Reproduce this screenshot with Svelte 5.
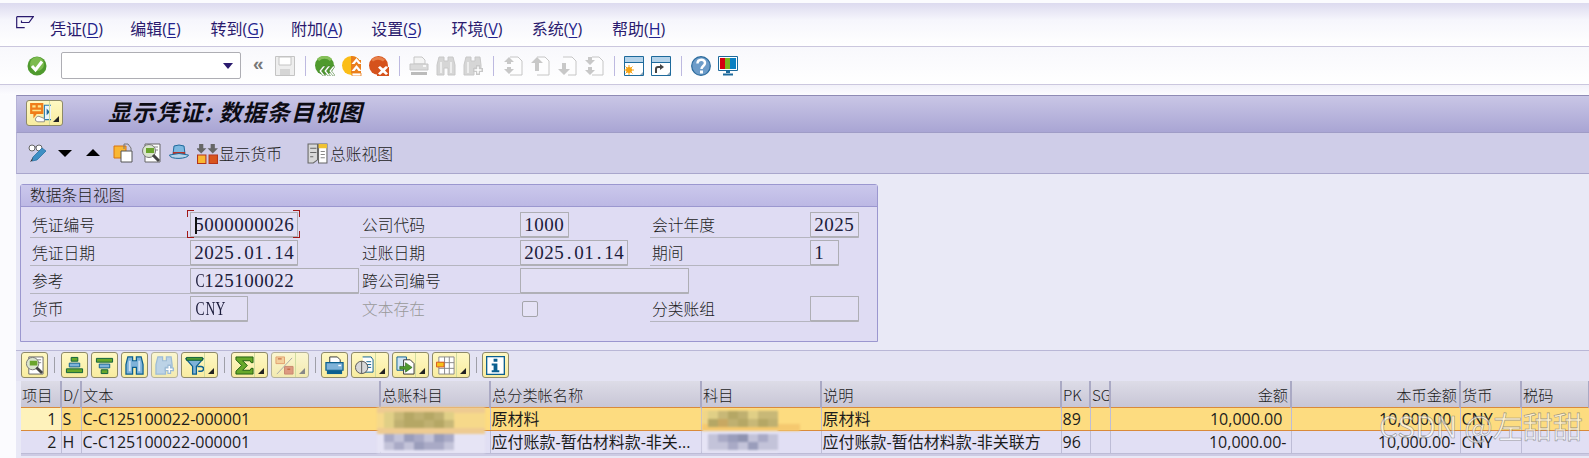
<script>
  // icon bodies, all drawn on a 20x20 box
  const I = {
    check: '<circle cx="10" cy="10" r="9.500" fill="#4f9a2e"/><circle cx="10" cy="8" r="7" fill="#7dbb4f"/><path d="M5 10l3.500 4L15 5.500" fill="none" stroke="#fff" stroke-width="3"/>',
    save: '<path d="M.5.500h19v19H.5z" fill="#eee" stroke="#c4c4c4"/><path d="M4 1h12v8H4z" fill="#fff" stroke="#c4c4c4"/><path d="M5 13h10v6H5z" fill="#d5d5d5"/>',
    back: '<circle cx="9.500" cy="9.500" r="9.500" fill="#4f9a2e"/><path d="M3 4a9 9 0 0 1 13 0" fill="none" stroke="#86c05a" stroke-width="3"/><path d="M9 15l4-5h2.500l-4 5 4 5H13zM14 15l4-5h2.500l-4 5 4 5H18zM4 15l4-5h2.500l-4 5 4 5H8z" fill="#fff" stroke="#2c6b18" stroke-width=".5"/>',
    exit: '<circle cx="9.500" cy="9.500" r="9.500" fill="#fbbd17"/><path d="M9 0a9.500 9.500 0 0 1 10 10v7H9z" fill="#ea7f1c"/><path d="M10 19V4h9v15z" fill="#ea7f1c"/><path d="M14.500 2l5 6h-3l-2-2.500L12.500 8h-3zM14.500 9l5 6h-3l-2-2.500-2 2.500h-3z" fill="#fff"/><path d="M10 17h9v3h-9z" fill="#fff" stroke="#ea7f1c" stroke-width=".8"/>',
    cancel: '<circle cx="9.500" cy="9.500" r="9.500" fill="#d5521c"/><path d="M3 4.500a9 9 0 0 1 12 0" fill="none" stroke="#e8814a" stroke-width="3"/><path d="M8 11h12v9H8z" fill="#d5521c"/><path d="M9 11.500l2-1.500 3 2.500 3-2.500 2 1.500-3 3 3 3-2 1.500-3-2.500-3 2.500-2-1.500 3-3z" fill="#fff"/>',
    print: '<path d="M5 1h8l3 3v4H5z" fill="#f4f4f4" stroke="#c6c6c6"/><path d="M1 8h18v6H1z" fill="#dadada" stroke="#c6c6c6"/><path d="M14 10h3" stroke="#fff" stroke-width="1.500"/><path d="M2 16h16v3H2z" fill="#bbb"/>',
    find: '<path d="M3 1h5v4h4V1h5l2 8v10h-7v-7H8v7H1V9z" fill="#d6d6d6" stroke="#c8c8c8"/><path d="M5 6v11M15 6v11" stroke="#eee" stroke-width="2"/>',
    findp: '<path d="M3 1h5v4h4V1h5l1 8v3h-7v7H1V9z" fill="#d6d6d6" stroke="#c8c8c8"/><path d="M5 6v11" stroke="#eee" stroke-width="2"/><path d="M15 9v10M10 14h10" stroke="#c8c8c8" stroke-width="4"/><path d="M15 10.500v7M11.500 14h7" stroke="#fff" stroke-width="1.500"/>',
    first: '<path d="M7 1h8l4 4v14H7" fill="#fdfdfe" stroke="#c6c6c6"/><path d="M6 1l5 5H8v2H4V6H1zM6 18l5-5H8v-2H4v2H1z" fill="#c8c8c8"/>',
    prev: '<path d="M7 1h8l4 4v14H7" fill="#fdfdfe" stroke="#c6c6c6"/><path d="M7 1l6 6H9v8H5V7H1z" fill="#c8c8c8"/>',
    next: '<path d="M6 1h9l4 4v14H11" fill="#fdfdfe" stroke="#c6c6c6"/><path d="M7 19l6-6H9V7H5v6H1z" fill="#c8c8c8"/>',
    last: '<path d="M8 1h7l4 4v14H8" fill="#fdfdfe" stroke="#c6c6c6"/><path d="M6 9l5-5H8V1H4v3H1zM6 19l5-5H8v-3H4v3H1z" fill="#c8c8c8"/>',
    winnew: '<path d="M.5.500h19v19H.5z" fill="#fff" stroke="#1e6a9c"/><path d="M1 1h18v5H1z" fill="#b5d3ea"/><path d="M.5 6.500h19" stroke="#1e6a9c"/><circle cx="5" cy="14" r="3" fill="#f6a313"/><path d="M5 9v10M0 14h10M1.500 10.500l7 7M8.500 10.500l-7 7" stroke="#f6a313"/><path d="M16 19h3v-3z" fill="#8fa6b8"/>',
    winlink: '<path d="M.5.500h19v19H.5z" fill="#fff" stroke="#1e6a9c"/><path d="M1 1h18v5H1z" fill="#b5d3ea"/><path d="M.5 6.500h19" stroke="#1e6a9c"/><path d="M5 17v-4q0-2 2-2h3" fill="none" stroke="#444" stroke-width="2"/><path d="M9 8l4 3-4 3z" fill="#444"/><path d="M16 19h3v-3z" fill="#8fa6b8"/>',
    help: '<circle cx="10" cy="10" r="9.300" fill="#6d9cc9" stroke="#2a6a9c" stroke-width="1.200"/><path d="M6.500 7.500c0-5 7.500-5 7.500-.5 0 3-3.500 3-3.500 6" fill="none" stroke="#fff" stroke-width="2.500"/><path d="M9 14.500h3v3H9z" fill="#fff"/>',
    monitor: '<path d="M.5.500h19v14H.5z" fill="#fff" stroke="#1e6a9c"/><path d="M2 2h5v11H2z" fill="#d40010"/><path d="M7 2h5v11H7z" fill="#7ab51d"/><path d="M12 2h6v11h-6z" fill="#0a7fc2"/><path d="M8 15h4v2H8zM5 17.500h10v2H5z" fill="#1e6a9c"/>',
    titlemenu: '<path d="M1 1h12v10H7l-3 4v-4H1z" fill="#ef7d1a"/><path d="M3 3h3v2H3zM8 3h3v2H8zM3 7h8v1.500H3z" fill="#fde68a"/><path d="M14 3h7v13h-7z" fill="#eaf4fb" stroke="#2a7db0"/><path d="M16 6l3 3-3 3z" fill="#1e6a9c"/><path d="M6 17a3 3 0 0 1 3-4l5 2v3H8z" fill="#fff" stroke="#777" stroke-width=".7"/>',
    glass: '<circle cx="4" cy="5" r="3" fill="#fff" stroke="#666"/><circle cx="11" cy="5" r="3" fill="#fff" stroke="#666"/><path d="M7 4h1" stroke="#666"/><path d="M4 18l1-4 9-9 4 3-9 9z" fill="#3f8fc4" stroke="#1e6a9c" stroke-width=".7"/><path d="M2 19l2-1 1-4z" fill="#333"/>',
    down: '<path d="M3 7h14l-7 7z" fill="#000"/>',
    up: '<path d="M3 13h14l-7-7z" fill="#000"/>',
    copy: '<path d="M1 3h12v12H1z" fill="#f9b733" stroke="#d9730f"/><path d="M8 8h11v11H8z" fill="#fff" stroke="#555"/><path d="M11 6V1h4l3 4v3" fill="none" stroke="#777"/>',
    detail: '<path d="M4 1h15v18H4z" fill="#fff" stroke="#666"/><path d="M7 4h10M7 7h10" stroke="#888"/><circle cx="8" cy="8" r="6.500" fill="#dbe5cf" stroke="#777"/><path d="M5 5h8v5H5z" fill="#6aa52c"/><path d="M12 12l6 6" stroke="#444" stroke-width="3"/>',
    hat: '<path d="M5 3q5-2 10 0l1 8H4z" fill="#7cb8e0" stroke="#1e6a9c"/><path d="M4 9h12v3H4z" fill="#b5342a"/><path d="M.5 12q9.500-3 19 0c0 4-19 5-19 0z" fill="#b5d3ea" stroke="#1e6a9c"/>',
    curr: '<path d="M2 1h4v4h3l-5 5-5-5h3zM13 1h4v4h3l-5 5-5-5h3z" fill="#666"/><path d="M.5 11.500h8v8h-8z" fill="#f9b733" stroke="#b5341a"/><path d="M11.500 11.500h8v8h-8z" fill="#d9541e" stroke="#b5341a"/>',
    ledger: '<path d="M1 1h9v15l-4 3H1z" fill="#d8d8d8" stroke="#666"/><path d="M3 5h6M3 9h6M3 13h3" stroke="#666"/><path d="M11 1h8v18h-8z" fill="#fff" stroke="#666"/><path d="M11 1h8v4h-8z" fill="#f1c232"/><path d="M13 8h4M13 11h4M13 14h4" stroke="#888"/>',
    sortup: '<path d="M6.500 1.500h7v4h-7z" fill="#67a82a" stroke="#0b5f3c"/><path d="M4.500 7.500h11v4h-11z" fill="#7eb2d9" stroke="#0b5f8f"/><path d="M1.500 13.500h17v4h-17z" fill="#67a82a" stroke="#0b5f3c"/>',
    sortdown: '<path d="M1.500 2.500h17v4h-17z" fill="#67a82a" stroke="#0b5f3c"/><path d="M4.500 8.500h11v4h-11z" fill="#7eb2d9" stroke="#0b5f8f"/><path d="M6.500 14.500h7v4h-7z" fill="#67a82a" stroke="#0b5f3c"/>',
    bfind: '<path d="M3 1h5v4h4V1h5l2 8v10h-7v-7H8v7H1V9z" fill="#7eb2d9" stroke="#0b5f8f" stroke-width="1.300"/><path d="M5 5v11M15 5v11" stroke="#cfe3f2" stroke-width="2"/>',
    bfindp: '<path d="M3 1h5v4h4V1h5l1 8v3h-7v7H1V9z" fill="#bcd3e6" stroke="#9dbcd6" stroke-width="1.300"/><path d="M15 9v10M10 14h10" stroke="#9dbcd6" stroke-width="4"/><path d="M15 10.500v7M11.500 14h7" stroke="#fff" stroke-width="1.500"/>',
    funnel: '<path d="M1 3h18L12 11v8H8v-8z" fill="#7eb2d9" stroke="#0b5f8f" stroke-width="1.300"/><path d="M1.500 1.500h17v3h-17z" fill="#4f9a2e" stroke="#0b5f3c"/><path d="M13 11h4a2.500 2.500 0 0 1 0 5h-3" fill="none" stroke="#0b5f8f" stroke-width="1.500"/>',
    sigma: '<path d="M1 1h18v6h-2l-1-2H8l5 5-5 5h8l1-2h2v6H1v-3l6-6-6-6z" fill="#67a82a" stroke="#1f5f12"/>',
    subtot: '<path d="M1 1h9v7H1z" fill="#f3d09c" stroke="#e0a070"/><path d="M10 11h9v8h-9z" fill="#dd9a80" stroke="#c98870"/><path d="M3 3h4M13 14h3" stroke="#c9704a" stroke-width="1.500"/><path d="M2 19L18 2" stroke="#a9a9a9"/>',
    bprint: '<path d="M5 1h8l3 3v3H5z" fill="#fff" stroke="#333"/><path d="M1 7h18v8H1z" fill="#7eb2d9" stroke="#0b5f8f" stroke-width="1.300"/><path d="M2 15h16v4H2z" fill="#0b5f8f"/><path d="M14 10h3" stroke="#fff" stroke-width="1.500"/>',
    view: '<path d="M8 1h9l2 3v13h-9" fill="#fff" stroke="#0b5f8f"/><path d="M12 6h5M12 9h5M12 12h5" stroke="#0b5f8f"/><circle cx="7" cy="12" r="6.500" fill="#d8d8d8" stroke="#555"/><path d="M7 5.500v13" stroke="#555"/>',
    export: '<path d="M1 1h10v14H1z" fill="#cfe3f2" stroke="#0b5f8f"/><path d="M8 4h7l4 4v11H8z" fill="#fff" stroke="#333"/><path d="M4 11h6V7l7 5-7 5v-3H4z" fill="#4f9a2e" stroke="#1f5f12" stroke-width=".6"/>',
    layout: '<path d="M3 1h16v18H3z" fill="#fff" stroke="#888"/><path d="M9 1v18M14 1v18M3 7h16M3 13h16" stroke="#888"/><path d="M.5 6.500h8v5h-8z" fill="#f5c21b" stroke="#d9541e"/>',
    info: '<path d="M.7.700h18.600v18.600H.7z" fill="#fff" stroke="#0b5f8f" stroke-width="1.400"/><path d="M8 3h4v3H8zM6 8h6v7h2v2H6v-2h2v-5H6z" fill="#0b5f8f"/>'
  };

  const menus = [['凭证', 'D'], ['编辑', 'E'], ['转到', 'G'], ['附加', 'A'], ['设置', 'S'], ['环境', 'V'], ['系统', 'Y'], ['帮助', 'H']];

  const tools = [
    ['back', 'exit', 'cancel'], ['print', 'find', 'findp'], ['first', 'prev', 'next', 'last'], ['winnew', 'winlink'], ['help', 'monitor']
  ];

  const gridTools = [
    [['detail']],
    [['sortup'], ['sortdown'], ['bfind'], ['bfindp', 0, 1], ['funnel', 1]],
    [['sigma', 1], ['subtot', 1, 1]],
    [['bprint'], ['view', 1], ['export', 1], ['layout', 1]],
    [['info']]
  ];

  const cols = [40, 20, 299, 110, 211, 120, 240, 29, 20, 181, 169, 61, 68];
  const heads = [['项目'], ['D/'], ['文本'], ['总账科目'], ['总分类帐名称'], ['科目'], ['说明'], ['PK'], ['SG'], ['金额', 'r'], ['本币金额', 'r'], ['货币'], ['税码']];
  const rows = [
    ['1', 'S', 'C-C125100022-000001', '', '原材料', '', '原材料', '89', '', '10,000.00 ', '10,000.00 ', 'CNY', ''],
    ['2', 'H', 'C-C125100022-000001', '', '应付账款-暂估材料款-非关...', '', '应付账款-暂估材料款-非关联方', '96', '', '10,000.00-', '10,000.00-', 'CNY', '']
  ];

  // pixelated patches over the account numbers, x/y relative to the table
  const Y = '#c8b877', D = '#b5a765', O = '#bfb070', T = '#e0cf86', B = '#a9aac6', C = '#9a9dbb', L = '#c3c3d9';
  const W = '#e6e4f5';
  const patches = [
    [356, 26, 108, 6, '#eecb92'], [356, 47, 108, 6, '#eecb92'], [356, 32, 108, 15, '#f6d98a'], [356, 53, 108, 19, W],
    [681, 29, 76, 14, '#f0d688'], [681, 43, 98, 7, '#f5c96f'], [681, 50, 76, 21, W]
  ];
  const mosaics = [
    [363, 31, [T, Y, D, O, D, O, T]],
    [363, 39, [T, O, D, D, O, D, Y]],
    [363, 53, [B, L, C, B, L, C, B]],
    [363, 61, [L, B, L, C, B, B, L]],
    [687, 30, [T, Y, D, O, T, Y, Y]],
    [687, 38, [D, '#c8a862', O, D, Y, D, O]],
    [687, 53, [L, B, C, '#8f93b0', L, B, L]],
    [687, 61, [L, L, B, L, C, L, L]]
  ];

  const isLetter = (ch) => /[A-Z]/.test(ch);
</script>

{#snippet icon(name, disabled = false)}
  <svg class="ic" class:dim={disabled} viewBox="0 0 20 20">{@html I[name]}</svg>
{/snippet}

{#snippet fixed(text)}
  {#each text as ch}<span class="ch" class:alpha={isLetter(ch)}>{ch}</span>{/each}
{/snippet}

<div class="screen">
  <div class="menubar">
    <svg class="menu-ic" viewBox="0 0 18 13"><path d="M.7.700h16.600L13 6.500H5.500v-2M.7.700v11h8" fill="none" stroke="#2a1a6e" stroke-width="1.200"/></svg>
    {#each menus as [name, key]}
      <span class="menu">{name}(<u>{key}</u>)</span>
    {/each}
  </div>

  <div class="systools">
    <span class="check">{@render icon('check')}</span>
    <div class="combo"><span class="caret"></span></div>
    <span class="chev">«</span>
    {@render icon('save')}
    {#each tools as group}
      <i class="sep"></i>
      {#each group as t}{@render icon(t)}{/each}
    {/each}
  </div>

  <div class="strip"></div>

  <main>
    <header class="titlebar">
      <button class="ybtn title-btn">{@render icon('titlemenu')}<span class="drop"></span></button>
      <h1>显示凭证: 数据条目视图</h1>
    </header>

    <div class="apptools">
      {@render icon('glass')}
      <span class="tri">{@render icon('down')}</span>
      <span class="tri">{@render icon('up')}</span>
      {@render icon('copy')}
      {@render icon('detail')}
      {@render icon('hat')}
      <span class="tool-text">{@render icon('curr')}显示货币</span>
      <span class="tool-text ledger">{@render icon('ledger')}总账视图</span>
    </div>

    <section class="group">
      <div class="group-head">数据条目视图</div>
      <div class="form">
        <label class="lbl">凭证编号</label>
        <div class="cell"><span class="inp w108 cursor">{@render fixed('5000000026')}<b class="marks"></b></span></div>
        <label class="lbl">公司代码</label>
        <div class="cell"><span class="inp w48">{@render fixed('1000')}</span></div>
        <label class="lbl">会计年度</label>
        <div class="cell"><span class="inp w48">{@render fixed('2025')}</span></div>

        <label class="lbl">凭证日期</label>
        <div class="cell"><span class="inp w108">{@render fixed('2025.01.14')}</span></div>
        <label class="lbl">过账日期</label>
        <div class="cell"><span class="inp w108">{@render fixed('2025.01.14')}</span></div>
        <label class="lbl">期间</label>
        <div class="cell"><span class="inp w28">{@render fixed('1')}</span></div>

        <label class="lbl">参考</label>
        <div class="cell"><span class="inp w168">{@render fixed('C125100022')}</span></div>
        <label class="lbl">跨公司编号</label>
        <div class="cell"><span class="inp w168"></span></div>
        <span></span>
        <span></span>

        <label class="lbl">货币</label>
        <div class="cell"><span class="inp w58">{@render fixed('CNY')}</span></div>
        <label class="lbl off">文本存在</label>
        <div class="cell nobox"><span class="box"></span></div>
        <label class="lbl">分类账组</label>
        <div class="cell"><span class="inp w48"></span></div>
      </div>
    </section>

    <div class="gridtools">
      {#each gridTools as group, g}
        {#if g}<i class="gsep"></i>{/if}
        {#each group as [name, menu, off]}
          <button class="ybtn" class:menu-btn={menu} class:off>{@render icon(name)}{#if menu}<span class="drop"></span>{/if}</button>
        {/each}
      {/each}
    </div>

    <div class="table-wrap">
      <table>
        <colgroup>{#each cols as w}<col style="width:{w}px" />{/each}</colgroup>
        <thead>
          <tr>{#each heads as [h, a]}<th class:r={a}>{h}</th>{/each}</tr>
        </thead>
        <tbody>
          {#each rows as row, n}
            <tr class:sel={n === 0}>
              {#each row as v, c}
                <td class:key={c === 0} class:r={c === 0 || c === 9 || c === 10}>{v}</td>
              {/each}
            </tr>
          {/each}
        </tbody>
      </table>

      <svg class="blur" width="830" height="75" shape-rendering="crispEdges">
        {#each patches as [x, y, w, h, c]}<rect {x} {y} width={w} height={h} fill={c} />{/each}
        {#each mosaics as [x, y, list]}
          {#each list as c, k}<rect x={x + k * 10} {y} width="10" height="8" fill={c} />{/each}
        {/each}
      </svg>
      <div class="mark">CSDN @左甜甜</div>
    </div>
  </main>
</div>

<style>
  :global(body){margin:0;background:#fbfbfe;overflow:hidden}
  .screen{width:1589px;height:458px;overflow:hidden;display:flex;flex-direction:column;font-family:"Noto Sans CJK SC","Liberation Sans",sans-serif;color:#1c1c1c;font-weight:300}
  .ic{width:20px;height:20px;flex:none;display:block}
  button{font:inherit;padding:0;margin:0}
  i{font-style:normal}

  .menubar{height:43px;margin-top:3px;border-bottom:1px solid #cbc7de;display:flex;align-items:center;background:linear-gradient(#dcdaef,#f6f6fc 40%,#fff);color:#2a1a6e;padding-left:16px;flex:none}
  .menu-ic{width:18px;height:13px;margin:-5px 16px 0 0}
  .menu{width:80.300px;white-space:nowrap;font-family:"Open Sans","Noto Sans CJK SC",sans-serif;font-weight:400;font-size:16px;padding-top:6px}
  .menu u{text-underline-offset:2px;color:#23238e}

  .systools{height:37px;display:flex;align-items:center;gap:7px;padding-left:27px;background:linear-gradient(#f8f8fc,#fff);border-bottom:1px solid #cbc7de;flex:none}
  .check{margin-right:7px}
  .combo{width:178px;height:25px;margin-right:5px;background:#fff;border:1px solid #aeaeb4;border-radius:2px;position:relative}
  .caret{position:absolute;right:7px;top:10px;border:5px solid transparent;border-top:6px solid #2a1a6e;border-bottom:0}
  .chev{font:700 19px/20px "Liberation Sans",sans-serif;color:#777;width:12px;margin:-4px 3px 0 0}
  .sep{width:1px;height:20px;background:#bdb9e0;margin:0 2px 0 3px}

  .strip{height:10px;background:linear-gradient(#f2f1f9,#fcfcff);flex:none}

  main{flex:1;margin-left:16px;background:#e9e9f6;min-height:0}
  .titlebar{height:36px;display:flex;align-items:center;background:linear-gradient(#c9c6e6,#a9a5d4);border-top:1px solid #8f8bb5;border-left:1px solid #b5b2d6;padding-left:9px;border-bottom:1px solid #9f9cc6}
  h1{margin:-6px 0 0 45px;font-size:23px;line-height:1;font-weight:700;font-style:italic;color:#0c0c14;letter-spacing:1px;white-space:nowrap}
  .ybtn{height:26px;width:27px;flex:none;display:flex;align-items:center;justify-content:center;position:relative;background:linear-gradient(#fff8c4,#f8eca0);border:1px solid #8e8a68;border-radius:3px;box-sizing:border-box}
  .menu-btn{width:37.500px;justify-content:flex-start;padding-left:3px}
  .ybtn .ic{width:19px;height:19px}
  .ybtn.off{background:linear-gradient(#fbf6d0,#f3eab0);border-color:#b5b29a}
  .drop{position:absolute;right:3px;bottom:3px;border-style:solid;border-width:0 0 6px 6px;border-color:transparent transparent #222 transparent}
  .off .drop{border-bottom-color:#888}
  .menu-btn::after,.title-btn::after{content:"";position:absolute;right:12px;top:0;bottom:0;width:1px;background:#cfdca0}
  .title-btn{width:37px;justify-content:flex-start;padding-left:2px;margin-top:-3px}
  .title-btn .ic{width:22px;height:22px}

  .apptools{height:40px;display:flex;align-items:center;padding-left:11px;gap:8px;background:#cfcde8;border-bottom:1px solid #a9a6cc;border-left:1px solid #b5b2d6}
  .tri{margin-left:-1px}
  .tri + .tri{margin:0 2px 0 0}
  .tool-text{display:flex;align-items:center;gap:1px;font-size:15.750px;font-weight:300}
  .tool-text .ic{width:21px;height:21px}
  .ledger{margin-left:17px;gap:2px}

  .group{margin:10px 0 0 4px;width:858px;height:158px;box-sizing:border-box;background:#dfdcf3;border:1px solid #9b97cf;border-radius:3px 3px 0 0}
  .group-head{height:21px;line-height:20px;padding-left:9px;font-size:15.750px;background:linear-gradient(#cbc8ec,#bcb8e4);border-bottom:1px solid #9b97cf}
  .form{display:grid;grid-template-columns:160px 170px 160px 130px 160px 60px;grid-auto-rows:28px;padding:3px 0 0 9px}
  .lbl{border-bottom:1px solid #b5b5bf;font-size:15.750px;line-height:26px;padding:2px 0 0 2px;box-sizing:border-box;white-space:nowrap}
  .lbl.off{color:#999;border-bottom:0}
  .cell{display:flex;align-items:flex-end}
  .inp{height:26px;box-sizing:border-box;border:1px solid #aeaeb4;border-bottom:2px solid #b0b0b6;border-radius:1px;background:#e2dff4;font:400 19px/23px "Liberation Serif",serif;color:#1b1b3a;padding-left:3px;flex:none;position:relative;white-space:nowrap}
  .ch{display:inline-block;width:10px;text-align:center}
  .alpha{transform:scaleX(.72)}
  .w108{width:108px}
  .w48{width:49px}
  .w28{width:29px}
  .w58{width:58px}
  .w168{width:169px}
  .cursor::before{content:"";position:absolute;left:4px;top:4px;height:17px;width:1.500px;background:#111}
  .marks{position:absolute;inset:-3px -3px -2px -4px;background:
    linear-gradient(#a11818,#a11818) 0 0/7px 1px,linear-gradient(#a11818,#a11818) 0 0/1px 7px,
    linear-gradient(#a11818,#a11818) 100% 0/7px 1px,linear-gradient(#a11818,#a11818) 100% 0/1px 7px,
    linear-gradient(#a11818,#a11818) 0 100%/7px 1px,linear-gradient(#a11818,#a11818) 0 100%/1px 7px,
    linear-gradient(#a11818,#a11818) 100% 100%/7px 1px,linear-gradient(#a11818,#a11818) 100% 100%/1px 7px;background-repeat:no-repeat}
  .nobox{align-items:center}
  .box{width:14px;height:14px;margin:2px 0 0 2px;border:1px solid #a5a5ab;border-radius:2px;background:#e6e3f6}

  .gridtools{margin-top:8px;height:30px;display:flex;align-items:center;gap:3px;padding-left:5px;background:#e4e3f3;border-top:1px solid #b9b7d6}
  .gridtools .ybtn{margin-top:-2px}
  .gsep{width:1px;height:16px;background:#9f9fa8;margin:-2px 2.500px 0 3px}

  .table-wrap{margin:0 0 0 5px;position:relative;background:#cdcbe4;height:75px;overflow:hidden}
  table{border-collapse:collapse;table-layout:fixed;width:1568px;font:400 16px/20px "Open Sans","Noto Sans CJK SC",sans-serif}
  th{height:26px;padding:0 2px 0 1px;box-sizing:border-box;text-align:left;font-weight:300;font-size:15.200px;font-family:"Noto Sans CJK SC",sans-serif;background:linear-gradient(#dddce7,#c8c6d6);border-right:2px solid #aaa9c4;overflow:hidden;white-space:nowrap}
  td{height:23px;padding:0 2px 0 1px;box-sizing:border-box;background:#e1dff4;border-right:1px solid #bdbcd6;border-bottom:1px solid #bdbcd6;overflow:hidden;white-space:nowrap}
  .sel td{background:#fddc80;border-top:1px solid #d98a3a;border-bottom:1px solid #d98a3a}
  .sel .key{background:#fef2bb}
  .r{text-align:right}
  tbody td.r{padding-right:4px;white-space:pre}

  .blur{position:absolute;left:0;top:0;filter:blur(1px);pointer-events:none}
  .mark{position:absolute;left:1358px;top:27px;font:400 30px/34px "Noto Sans CJK SC","Open Sans",sans-serif;color:rgba(255,255,255,.6);-webkit-text-stroke:.6px rgba(110,110,110,.7);white-space:nowrap}
</style>
